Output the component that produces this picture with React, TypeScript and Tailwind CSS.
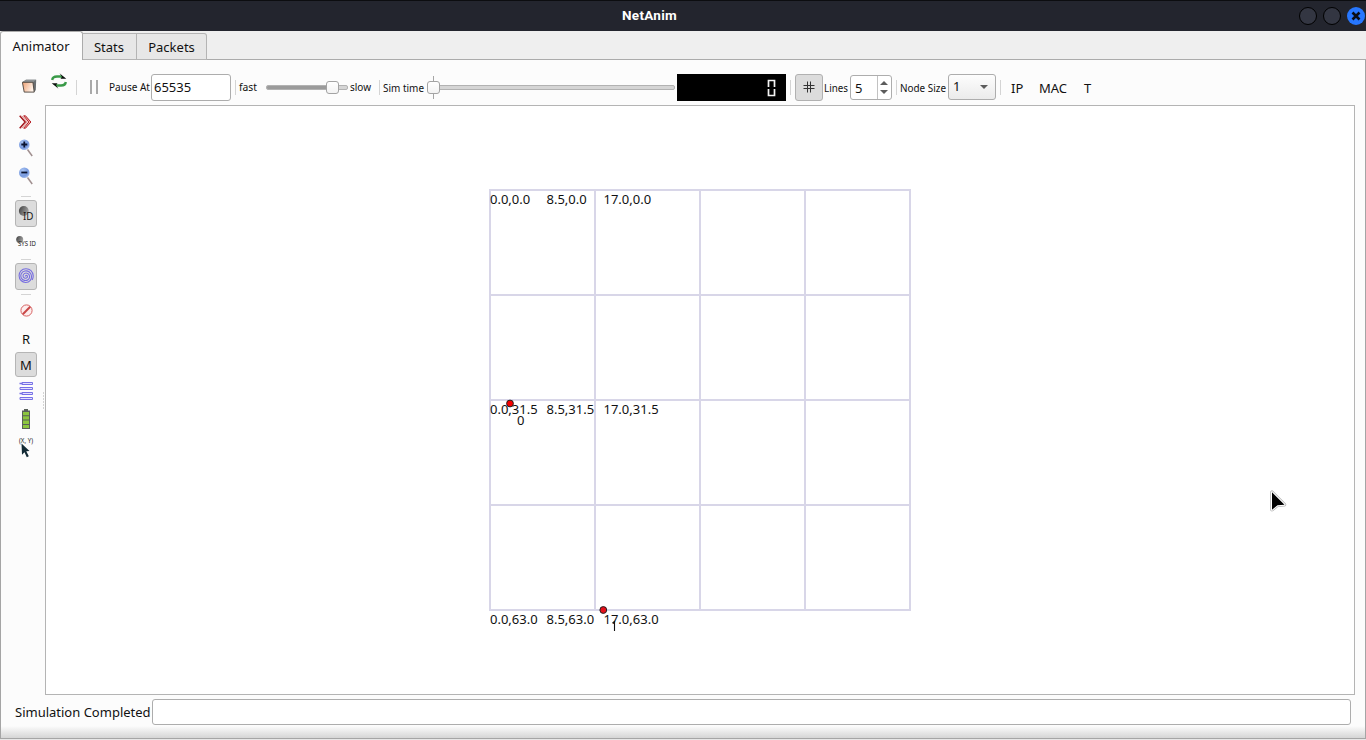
import React from "react";

const Sep = ({ className = "" }: { className?: string }) => (
  <div className={`-mt-px h-[15px] w-px shrink-0 bg-[#d4d4d4] ${className}`} />
);

const HSep = ({ className = "" }: { className?: string }) => (
  <div className={`h-px w-[10px] shrink-0 bg-[#d4d4d4] ${className}`} />
);

const Label = ({ className, children }: { className: string; children: React.ReactNode }) => (
  <svg className={`h-[16px] shrink-0 overflow-visible ${className}`}>
    <text x="0" y="12" fontSize="11" textLength="100%" lengthAdjust="spacingAndGlyphs" fill="#111">
      {children}
    </text>
  </svg>
);

const Handle = ({ className }: { className: string }) => (
  <div className={`absolute h-[13px] w-[13px] rounded-[3px] border border-[#a3a3a3] bg-gradient-to-b from-white to-[#f3f3f3] ${className}`} />
);

const labels = [
  { x: 490, y: 204, t: "0.0,0.0" },
  { x: 546.5, y: 204, t: "8.5,0.0" },
  { x: 603.5, y: 204, t: "17.0,0.0" },
  { x: 490, y: 414, t: "0.0,31.5" },
  { x: 546.5, y: 414, t: "8.5,31.5" },
  { x: 603.5, y: 414, t: "17.0,31.5" },
  { x: 490, y: 624, t: "0.0,63.0" },
  { x: 546.5, y: 624, t: "8.5,63.0" },
  { x: 603.5, y: 624, t: "17.0,63.0" },
];
const steps = [0, 105, 210, 315, 420];

function TitleBar() {
  return (
    <header className="flex h-[31px] shrink-0 items-center border-t border-[#0c0d10] bg-[#23252e] text-white">
      <div className="flex-1 pb-px text-center font-['Roboto','Liberation_Sans',sans-serif] text-[13.5px] leading-[29px] font-bold tracking-[0.25px]">NetAnim</div>
      <div className="flex w-[67px] gap-[6px]">
        <div className="h-[18px] w-[18px] shrink-0 rounded-full border border-black bg-[#333642]" />
        <div className="h-[18px] w-[18px] shrink-0 rounded-full border border-black bg-[#333642]" />
        <div className="flex h-[18px] w-[18px] shrink-0 items-center justify-center rounded-full bg-[#2777ff]">
          <svg width="10" height="10" viewBox="0 0 10 10">
            <path d="M1.5 1.5 8.5 8.5M8.5 1.5 1.5 8.5" stroke="#0b0d14" strokeWidth="2.6" />
          </svg>
        </div>
      </div>
    </header>
  );
}

function Tabs() {
  return (
    <nav className="flex h-[29px] shrink-0 items-end bg-[#efefef]">
      <div className="h-[29px] w-[83px] rounded-t-[3px] border border-b-0 border-[#ababab] bg-[#fcfcfc] pr-[1px] text-center leading-[29px]">Animator</div>
      <div className="h-[27px] w-[54px] border-t border-r border-b border-[#b4b4b4] bg-[#e7e7e7] pr-[1px] text-center leading-[27px]">Stats</div>
      <div className="h-[27px] w-[70px] rounded-tr-[3px] border-t border-r border-b border-[#b4b4b4] bg-[#e7e7e7] text-center leading-[27px]">Packets</div>
      <div className="h-px flex-1 bg-[#ababab]" />
    </nav>
  );
}

function Toolbar() {
  return (
    <div className="flex h-[45px] shrink-0 items-center pt-[10px]">
      <svg className="-mt-[3px] ml-[21px] shrink-0" width="15" height="14" viewBox="0 0 15 14">
        <defs>
          <linearGradient id="folder" x1="0" x2="1" y1="0" y2="0.4">
            <stop offset="0" stopColor="#efa174" />
            <stop offset="1" stopColor="#fff3ea" />
          </linearGradient>
        </defs>
        <path d="M.5 3 4 .8h10.2L13.8 11l-1.5 2L3 12.5z" fill="#6b7073" />
        <path d="M.5 3.2 4 .8h10.2L11 3.2z" fill="#8d9294" />
        <path d="M.4 3.3h10.5l1.3 9.8H2.2z" fill="url(#folder)" stroke="#4a423a" strokeWidth=".9" />
      </svg>
      <svg className="-mt-[14px] ml-[14px] shrink-0" width="16" height="16" viewBox="0 0 16 16">
        <path d="M1.2 7C1.5 4.5 4 3.5 6 3.5h5M14.8 9c-.3 2.5-2.8 3.5-4.8 3.5H5" fill="none" stroke="#3a9a48" strokeWidth="2.4" />
        <path d="M8.5.3 15.3 5.8H9.5L11 3.8zM7.5 15.7.7 10.2h5.8L5 12.2z" fill="#0b100c" />
      </svg>
      <Sep className="ml-[9px]" />
      <svg className="-mt-[2px] ml-[12px] shrink-0" width="9" height="14" viewBox="0 0 9 14">
        <path d="M2 0v14M8 0v14" stroke="#949494" strokeWidth="1.6" />
      </svg>
      <Label className="-mt-[2px] ml-[11px] w-[41px]">Pause At</Label>
      <div className="ml-px h-[27px] w-[80px] shrink-0 rounded-[3px] border border-[#adadad] bg-white pl-[2px] leading-[25px]">65535</div>
      <Sep className="ml-[4px]" />
      <Label className="-mt-[2px] ml-[3px] w-[18px]">fast</Label>
      <div className="relative ml-[9px] h-[17px] w-[82px] shrink-0 pt-[6px]">
        <div className="flex h-[5px] overflow-hidden rounded-[2px] border border-[#b2b2b2] bg-[#d5d5d5]">
          <div className="-my-px -ml-px h-[5px] w-[64px] border border-[#707070] bg-[#9b9b9b]" />
        </div>
        <Handle className="top-[2px] left-[60px]" />
      </div>
      <Label className="-mt-[2px] ml-[2px] w-[21px]">slow</Label>
      <Sep className="ml-[8px]" />
      <Label className="ml-[3px] w-[41px]">Sim time</Label>
      <div className="relative ml-[3px] h-[23px] w-[248px] shrink-0 pt-[9px]">
        <div className="h-[5px] rounded-[2px] border border-[#b2b2b2] bg-[#d5d5d5]" />
        <div className="absolute top-0 left-[6px] h-[23px] w-px bg-[#a5a5a5]" />
        <Handle className="top-[5px] left-0" />
      </div>
      <div className="ml-[2px] flex h-[27px] w-[109px] shrink-0 items-center justify-end bg-black pr-[10px]">
        <svg width="9" height="18" viewBox="0 0 9 18">
          <path d="M1.5 8V1.5h6V8M1.5 10v6.5h6V10" fill="none" stroke="#f4f4f4" strokeWidth="1.7" />
        </svg>
      </div>
      <Sep className="ml-[4px]" />
      <div className="ml-[4px] flex h-[27px] w-[28px] shrink-0 items-center justify-center rounded-[3px] border border-[#b1b1b1] bg-[#dcdcdc]">
        <svg className="-mt-px" width="12" height="12" viewBox="0 0 12 12">
          <path d="M4.5.5v11M7.5.5v11M.5 4.5h11M.5 7.5h11" stroke="#333" strokeWidth="1" />
        </svg>
      </div>
      <Label className="ml-[1px] w-[24px]">Lines</Label>
      <div className="ml-[2px] flex h-[25px] w-[42px] shrink-0 rounded-[3px] border border-[#adadad] bg-white">
        <div className="w-[26px] pl-[4px] leading-[25px]">5</div>
        <div className="flex flex-1 flex-col items-center justify-center gap-[5px] border-l border-[#c2c2c2] pr-px">
          <svg width="8" height="4" viewBox="0 0 8 4"><path d="M0 4 4 0l4 4z" fill="#5c5c5c" /></svg>
          <svg width="8" height="4" viewBox="0 0 8 4"><path d="m0 0 4 4 4-4z" fill="#5c5c5c" /></svg>
        </div>
      </div>
      <Sep className="ml-[4px]" />
      <Label className="ml-[3px] w-[46px]">Node Size</Label>
      <div className="-mt-px ml-[2px] flex h-[26px] w-[48px] shrink-0 items-center justify-between rounded-[3px] border border-[#adadad] bg-gradient-to-b from-[#fdfdfd] to-[#ebebeb] pr-[7px] pb-px pl-[4px]">
        <span>1</span>
        <svg width="8" height="4" viewBox="0 0 8 4"><path d="m0 0 4 4 4-4z" fill="#5c5c5c" /></svg>
      </div>
      <Sep className="ml-[4px]" />
      <div className="ml-[10px] w-[28px] pt-[2px]">IP</div>
      <div className="w-[45px] pt-[2px]">MAC</div>
      <div className="pt-[2px]">T</div>
    </div>
  );
}

function Magnifier({ plus }: { plus?: boolean }) {
  return (
    <svg width="16" height="18" viewBox="0 0 16 18">
      <path d="m9.5 10.5 4.7 6.5" stroke="#a08f8f" strokeWidth="1.5" />
      <circle cx="6.3" cy="5.7" r="5.3" fill="url(#lens)" />
      <path d={plus ? "M3.3 5.5h6M6.3 2.5v6" : "M3.3 5.5h6"} stroke="#0a1330" strokeWidth="1.8" />
    </svg>
  );
}

const toggled = "flex w-[22px] shrink-0 items-center justify-center rounded-[3px] border border-[#b5b5b5] bg-[#dcdcdc]";

function SideBar() {
  return (
    <aside className="flex w-[44px] shrink-0 items-start">
      <div className="ml-[14px] flex w-[22px] shrink-0 flex-col items-center">
        <svg className="mt-[10px] mr-px" width="13" height="14" viewBox="0 0 13 14">
          <path d="M.7.8 6.2 7 .7 13.2" fill="none" stroke="#a3161c" strokeWidth="1.5" />
          <path d="M4.7.8h1.8L11.9 7l-5.4 6.2H4.7L9.8 7z" fill="#f2b0ad" stroke="#b51f25" strokeWidth="1" />
          <path d="M2.7.8 8.2 7l-5.5 6.2" fill="none" stroke="#d98482" strokeWidth="1" />
        </svg>
        <div className="mt-[10px] h-[18px]">
          <svg className="absolute" width="0" height="0">
            <defs>
              <radialGradient id="lens" cx=".35" cy=".3" r=".8">
                <stop offset="0" stopColor="#a7c2f1" />
                <stop offset=".65" stopColor="#7699df" />
                <stop offset="1" stopColor="#b3c6ef" />
              </radialGradient>
              <linearGradient id="ball" x1="0" x2="1" y1=".3" y2=".7">
                <stop offset="0" stopColor="#484848" />
                <stop offset="1" stopColor="#a8a8a8" />
              </linearGradient>
            </defs>
          </svg>
          <Magnifier plus />
        </div>
        <div className="mt-[10px] h-[18px]"><Magnifier /></div>
        <HSep className="mt-[11px]" />
        <div className={`mt-[3px] h-[27px] ${toggled}`}>
          <svg width="16" height="16" viewBox="0 0 16 16">
            <circle cx="5.8" cy="5" r="4.900" fill="url(#ball)" />
            <text x="5" y="14" fontSize="10" textLength="10.5" lengthAdjust="spacingAndGlyphs" className="font-['Noto_Sans']" fill="#161616">ID</text>
          </svg>
        </div>
        <svg className="mt-[9px] shrink-0 overflow-visible" width="20" height="12" viewBox="0 0 20 12">
          <circle cx="3.7" cy="3.6" r="3.5" fill="url(#ball)" />
          <text x="2" y="9.5" fontSize="7.5" textLength="18" lengthAdjust="spacingAndGlyphs" fill="#222">SYS ID</text>
        </svg>
        <HSep className="mt-[11px]" />
        <div className={`mt-[3px] h-[27px] ${toggled}`}>
          <svg className="-mt-px" width="16" height="18" viewBox="0 0 16 18" fill="none" stroke="#776ee0" strokeWidth="1.1">
            <path d="M7.500 9.500C7 8.500 8.800 7.800 9.300 9c.6 1.600-1.300 2.700-2.800 2.100C4.600 10.300 4.600 7.700 6.300 6.600c2.300-1.400 5.200.2 5.300 2.900.1 2.800-2.600 4.600-5.200 3.900C3.300 12.600 2 9.300 3.300 6.700 4.800 3.800 8.700 3.100 11.300 5c2.600 2 2.900 5.800 1 8.300M12.300 13.300C10 16.200 5.500 16 3 13.500.5 10.800.5 6.500 2.900 3.900 5.500 1.200 10.200 1 13 3.700c2.500 2.600 2.600 6.400 1.200 9.300" />
          </svg>
        </div>
        <HSep className="mt-[4px]" />
        <svg className="mt-[9px] shrink-0" width="13" height="13" viewBox="0 0 13 13">
          <circle cx="6.5" cy="6.5" r="5.6" fill="#fdeeee" stroke="#d76363" strokeWidth="1" />
          <path d="m2.8 10.2 7.4-7.4" stroke="#c94747" strokeWidth="2" />
        </svg>
        <div className="mt-[13px] h-[18px] leading-[18px]">R</div>
        <div className={`mt-[4px] h-[25px] pt-[2px] leading-[25px] ${toggled}`}>M</div>
        <svg className="mt-[5px] mr-[1px] shrink-0" width="14" height="19" viewBox="0 0 14 19" fill="#e5e2ff" stroke="#7771e6">
          <path d="M3 .5h10.500v2H3zM1 5.500h12.500v2H1zM3 10.500h10.500v2H3zM1 15.500h12.500v2H1z" />
          <path d="M.5 1.500h3M.5 11.500h3" strokeWidth="1.5" />
        </svg>
        <svg className="mt-[8px] shrink-0" width="8" height="20" viewBox="0 0 8 20">
          <path d="M2 0h4v1.500h2V20H0V1.500h2z" fill="#59605a" />
          <path d="M1 3h6v3.300H1zM1 7.300h6v3.200H1zM1 11.500h6V15H1zM1 16h6v3H1z" fill="#8cc63e" />
        </svg>
        <svg className="mt-[7px] shrink-0 overflow-visible" width="16" height="22" viewBox="0 0 16 22">
          <text x="1" y="7" fontSize="7.5" textLength="14" lengthAdjust="spacingAndGlyphs" fill="#222">(X, Y)</text>
          <path d="M3.500 7.500 11.500 15l-3.200.2 2.500 5-2 1-2.300-5L4 18.800z" fill="#132a35" />
        </svg>
      </div>
      <svg className="mt-[287px] ml-[6px] shrink-0" width="2" height="18" viewBox="0 0 2 18">
        <path d="M.5 .5v18" stroke="#aaa" strokeWidth="1" strokeDasharray="1 2" />
      </svg>
    </aside>
  );
}

function Canvas() {
  return (
    <main className="w-[1310px] shrink-0 border border-[#b4b4b4] bg-white">
      <svg width="1308" height="588" viewBox="46 106 1308 588">
        <g stroke="#d8d6e8" strokeWidth="2">
          {steps.map((s) => (
            <path key={s} d={`M${490 + s} 189V611M489 ${190 + s}H911`} />
          ))}
        </g>
        <g fontSize="13" fill="#111">
          {labels.map((l) => (
            <text key={l.t} x={l.x} y={l.y}>{l.t}</text>
          ))}
          <text x="517" y="425">0</text>
        </g>
        <path d="M612.5 623 614.5 621.5V631" fill="none" stroke="#111" strokeWidth="1.1" />
        <circle cx="510" cy="403.5" r="3.4" fill="#f80000" stroke="#222" />
        <circle cx="603.3" cy="610" r="3.4" fill="#e6101a" stroke="#222" />
        <g transform="translate(0 .7)" strokeLinejoin="round">
          <path d="M1272 491.500v17.500l5.500-4.500 7-.5z" stroke="#b5b5b5" strokeWidth="3.6" />
          <path d="M1272 491.500v17.500l5.500-4.500 7-.5z" stroke="#fff" strokeWidth="2" />
          <path d="M1272 491.500v17.500l5.500-4.500 7-.5z" />
        </g>
      </svg>
    </main>
  );
}

export default function App() {
  return (
    <div className="flex h-[740px] w-[1366px] flex-col overflow-hidden bg-[#e6e6e6] font-['Noto_Sans',sans-serif] text-[13px] text-[#111]">
      <TitleBar />
      <Tabs />
      <div className="flex h-[679px] shrink-0 flex-col border-r border-b border-l border-[#a5a5a5] bg-[#fcfcfc]">
        <Toolbar />
        <div className="flex h-[590px] shrink-0">
          <SideBar />
          <Canvas />
        </div>
        <div className="flex h-[31px] shrink-0 items-center pl-[14px]">
          <div className="mt-[3px] w-[137px] pt-px pb-[2px] leading-[18px] whitespace-nowrap">Simulation Completed</div>
          <div className="mt-[3px] h-[26px] w-[1199px] rounded-[3px] border border-[#adadad] bg-white" />
        </div>
        <div className="flex-1 bg-gradient-to-b from-[#fcfcfc] to-[#d5d5d5]" />
      </div>
    </div>
  );
}
